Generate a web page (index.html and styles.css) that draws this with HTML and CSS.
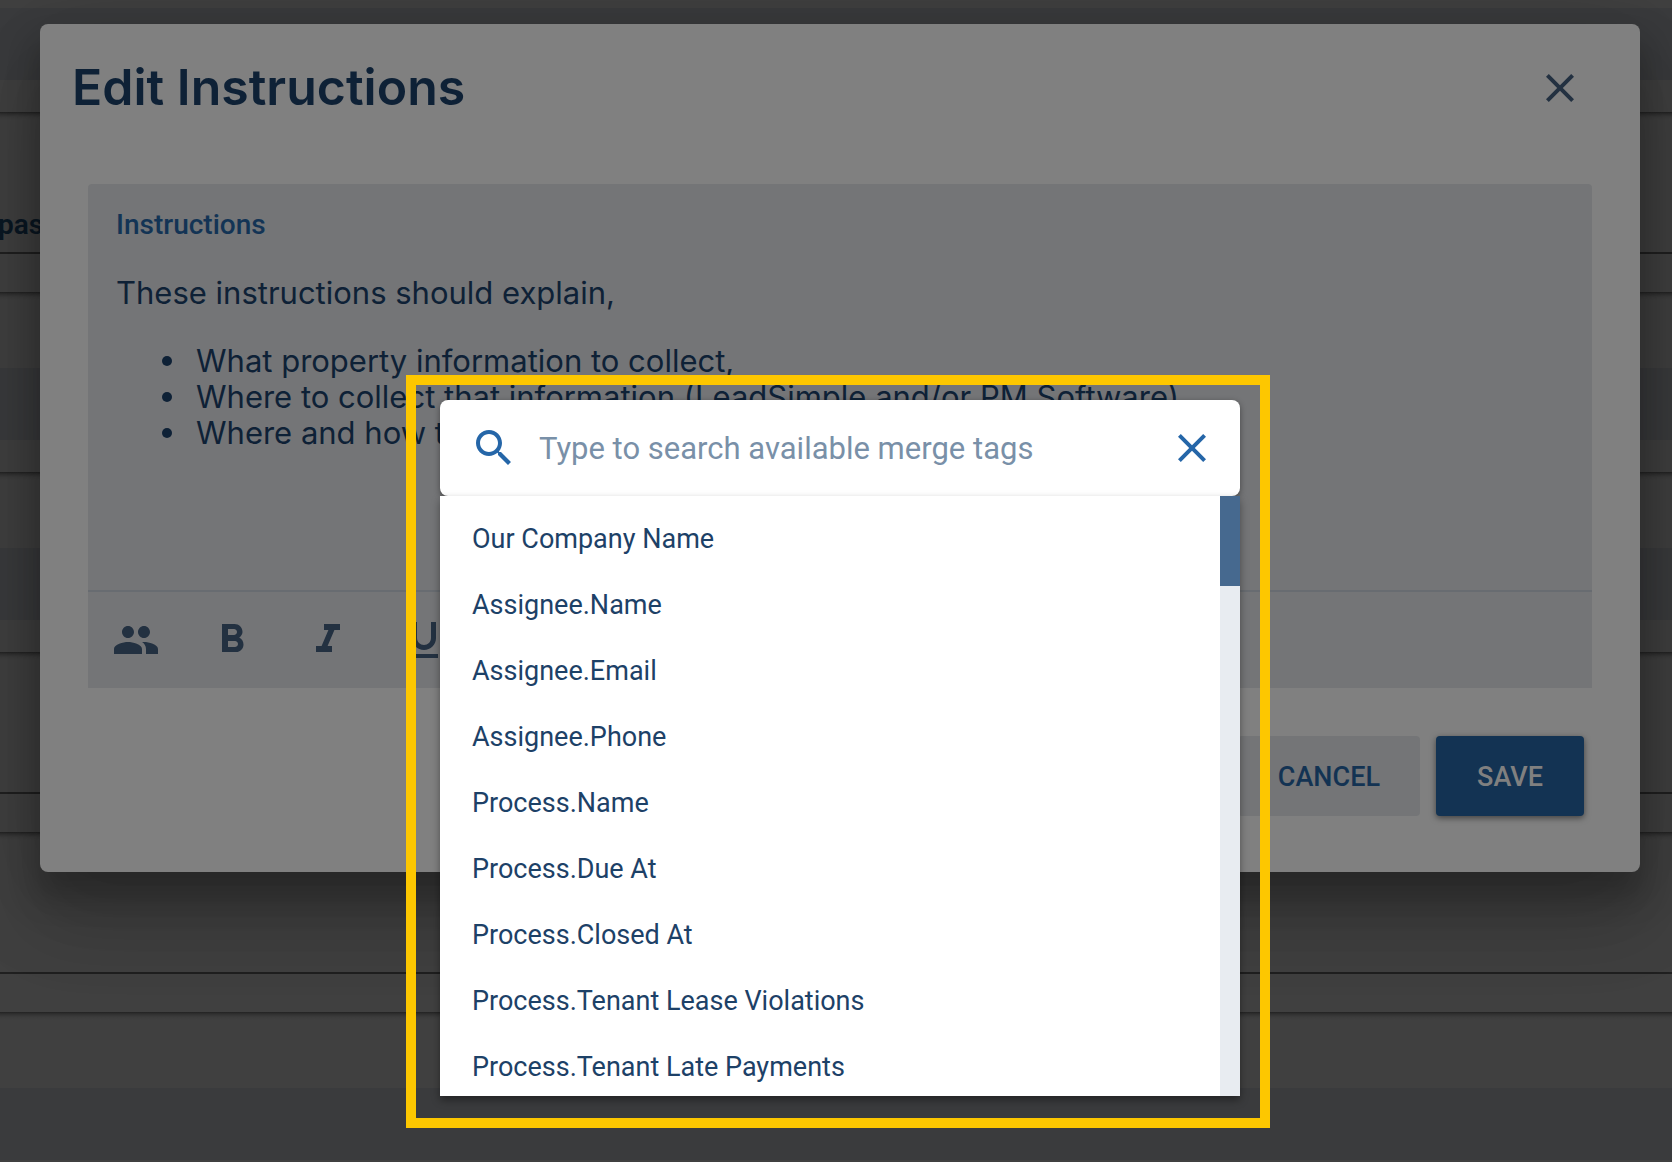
FILE: index.html
```html
<!DOCTYPE html>
<html lang="en">
<head>
  <meta charset="utf-8">
  <title>Edit Instructions</title>
  <link rel="stylesheet" href="styles.css">
</head>
<body>
  <div class="page">
    <div class="card card-first"><div class="card-field"></div></div>
    <div class="card card-tabs"><span class="card-label">pas</span></div>
    <div class="card"><div class="card-field"></div></div>
    <div class="card"><div class="card-field"></div></div>
    <div class="card card-tabs"></div>
    <div class="card card-tabs"></div>
    <div class="card"><div class="card-field"></div></div>
  </div>

  <div class="overlay">
    <section class="modal" role="dialog" aria-labelledby="modal-title">
      <header class="modal-header">
        <h1 class="modal-title" id="modal-title">Edit Instructions</h1>
        <button class="icon-button" type="button" aria-label="Close">
          <svg class="icon" viewBox="0 0 24 24"><path d="M19 6.41L17.59 5 12 10.59 6.41 5 5 6.41 10.59 12 5 17.59 6.41 19 12 13.41 17.59 19 19 17.59 13.41 12z"/></svg>
        </button>
      </header>

      <div class="editor">
        <div class="editor-body">
          <h2 class="editor-label">Instructions</h2>
          <p class="editor-text">These instructions should explain,</p>
          <ul class="editor-list">
            <li>What property information to collect,</li>
            <li>Where to collect that information (LeadSimple and/or PM Software)</li>
            <li>Where and how to</li>
          </ul>
        </div>
        <div class="toolbar">
          <button class="icon-button" type="button" aria-label="Merge tags">
            <svg class="icon" viewBox="0 0 24 24"><path d="M16 11c1.66 0 2.99-1.34 2.99-3S17.66 5 16 5c-1.66 0-3 1.34-3 3s1.34 3 3 3zm-8 0c1.66 0 2.99-1.34 2.99-3S9.66 5 8 5C6.34 5 5 6.34 5 8s1.34 3 3 3zm0 2c-2.33 0-7 1.17-7 3.5V19h14v-2.500c0-2.330-4.670-3.500-7-3.500zm8 0c-.29 0-.62.02-.97.05 1.160.84 1.970 1.970 1.970 3.450V19h6v-2.500c0-2.330-4.670-3.500-7-3.500z"/></svg>
          </button>
          <button class="icon-button" type="button" aria-label="Bold">
            <svg class="icon" viewBox="0 0 24 24"><path d="M15.600 10.790c.97-.67 1.650-1.770 1.650-2.790 0-2.260-1.750-4-4-4H7v14h7.040c2.090 0 3.710-1.700 3.710-3.790 0-1.520-.86-2.820-2.150-3.420zM10 6.500h3c.83 0 1.500.67 1.500 1.500s-.67 1.500-1.500 1.500h-3v-3zm3.500 9H10v-3h3.500c.83 0 1.500.67 1.500 1.500s-.67 1.500-1.500 1.500z"/></svg>
          </button>
          <button class="icon-button" type="button" aria-label="Italic">
            <svg class="icon" viewBox="0 0 24 24"><path d="M10 4v3h2.210l-3.420 8H6v3h8v-3h-2.210l3.420-8H18V4z"/></svg>
          </button>
          <button class="icon-button" type="button" aria-label="Underline">
            <svg class="icon" viewBox="0 0 24 24"><path d="M12 17c3.310 0 6-2.690 6-6V3h-2.500v8c0 1.930-1.570 3.500-3.500 3.500S8.500 12.930 8.500 11V3H6v8c0 3.310 2.690 6 6 6zm-7 2v2h14v-2H5z"/></svg>
          </button>
        </div>
      </div>

      <footer class="modal-footer">
        <button class="button" type="button">CANCEL</button>
        <button class="button button-primary" type="button">SAVE</button>
      </footer>
    </section>

    <div class="highlight">
      <form class="search">
        <svg class="icon" viewBox="0 0 24 24" aria-hidden="true"><path d="M15.500 14h-.79l-.28-.27C15.410 12.590 16 11.110 16 9.500 16 5.910 13.090 3 9.500 3S3 5.910 3 9.500 5.910 16 9.500 16c1.610 0 3.090-.59 4.230-1.570l.27.28v.79l5 4.990L20.490 19l-4.990-5zm-6 0C7.010 14 5 11.990 5 9.500S7.010 5 9.500 5 14 7.010 14 9.500 11.990 14 9.500 14z"/></svg>
        <input class="search-input" type="text" aria-label="Search merge tags" placeholder="Type to search available merge tags">
        <button class="icon-button" type="button" aria-label="Close search">
          <svg class="icon" viewBox="0 0 24 24"><path d="M19 6.41L17.59 5 12 10.59 6.41 5 5 6.41 10.59 12 5 17.59 6.41 19 12 13.41 17.59 19 19 17.59 13.41 12z"/></svg>
        </button>
      </form>
      <div class="results">
        <ul class="tags">
          <li><button class="tag" type="button">Our Company Name</button></li>
          <li><button class="tag" type="button">Assignee.Name</button></li>
          <li><button class="tag" type="button">Assignee.Email</button></li>
          <li><button class="tag" type="button">Assignee.Phone</button></li>
          <li><button class="tag" type="button">Process.Name</button></li>
          <li><button class="tag" type="button">Process.Due At</button></li>
          <li><button class="tag" type="button">Process.Closed At</button></li>
          <li><button class="tag" type="button">Process.Tenant Lease Violations</button></li>
          <li><button class="tag" type="button">Process.Tenant Late Payments</button></li>
        </ul>
        <div class="scrollbar"><div class="scrollbar-thumb"></div></div>
      </div>
    </div>
  </div>
</body>
</html>
```
FILE: styles.css
```css
* {
  box-sizing: border-box;
}

body {
  margin: 0;
  position: relative;
  overflow: hidden;
  height: 100vh;
  background: #404040;
  font-family: Roboto, "Liberation Sans", sans-serif;
}

button,
input {
  margin: 0;
  padding: 0;
  border: 0;
  background: none;
  color: inherit;
  font: inherit;
}

/* Page behind the dialog */
.card {
  height: 180px;
  padding-top: 76px;
  background: linear-gradient(#222, #303030 2px, #3c3c3c 5px, #404040 8px);
}

.card-first {
  height: 112px;
  padding-top: 8px;
  background: #404040;
}

.card-field {
  height: 72px;
  background: #3a3b3d;
}

.card-tabs {
  display: flex;
  flex-direction: column;
  justify-content: flex-end;
  padding: 0 0 38px;
}

.card-tabs::after {
  content: "";
  height: 2px;
  background: #202020;
}

.card-label {
  margin-left: -2px;
  padding-bottom: 9px;
  color: #0a1723;
  font-size: 28px;
  font-weight: 600;
  line-height: 36px;
}

/* Dialog */
.overlay {
  position: absolute;
  inset: 0;
  padding: 24px 32px 0 40px;
}

.modal {
  padding: 32px 48px 56px;
  border-radius: 8px;
  background: #808080;
  box-shadow: 0 22px 30px 4px rgba(0, 0, 0, 0.2), 0 48px 76px 6px rgba(0, 0, 0, 0.14), 0 18px 92px 16px rgba(0, 0, 0, 0.12);
  color: #0e2136;
}

.modal-header {
  display: flex;
  align-items: center;
  justify-content: space-between;
  height: 64px;
  margin: 0 8px 64px -16px;
}

.modal-title {
  margin: 0;
  padding-bottom: 2px;
  font-family: Inter, sans-serif;
  font-size: 50px;
  font-weight: 600;
  line-height: 60px;
}

.icon {
  display: block;
  flex: none;
  width: 48px;
  height: 48px;
  fill: currentColor;
}

.modal .icon {
  fill: #233141;
}

.editor {
  border-radius: 4px 4px 0 0;
  background: #747577;
}

.editor-body {
  height: 408px;
  padding: 23px 28px;
  border-bottom: 2px solid #686c71;
}

.editor-label {
  margin: 0 0 32px;
  color: #133455;
  font-size: 28px;
  font-weight: 500;
  line-height: 36px;
}

.editor-text,
.editor-list {
  margin: 0 0 32px;
  font-family: Inter, sans-serif;
  font-size: 31px;
  line-height: 36px;
}

.editor-list {
  padding-left: 46px;
  list-style: none;
}

.editor-list li {
  display: flex;
  align-items: center;
  gap: 24px;
}

.editor-list li::before {
  content: "";
  width: 10px;
  height: 10px;
  border-radius: 50%;
  background: currentColor;
}

.toolbar {
  display: flex;
  align-items: center;
  gap: 48px;
  height: 96px;
  padding: 0 24px;
}

.modal-footer {
  display: flex;
  justify-content: flex-end;
  gap: 16px;
  margin: 48px 8px 0;
}

.button {
  min-width: 148px;
  height: 80px;
  padding: 2px 40px 0;
  border-radius: 4px;
  background: #747577;
  color: #133353;
  font-size: 27px;
  font-weight: 500;
}

.button-primary {
  background: #133353;
  color: #808080;
  box-shadow: 0 2px 6px rgba(0, 0, 0, 0.5);
}

/* Merge tag picker */
.highlight {
  position: absolute;
  top: 375px;
  left: calc(50% - 430px);
  width: 864px;
  padding: 15px 20px 22px 24px;
  border: 10px solid #fdc700;
}

.search {
  display: flex;
  align-items: center;
  height: 96px;
  padding: 0 24px 0 30px;
  border-radius: 8px;
  background: #fff;
  box-shadow: 0 2px 6px rgba(0, 0, 0, 0.4);
  color: #2566a8;
}

.search-input {
  flex: 1;
  min-width: 0;
  padding: 2px 0 0 21px;
  outline: 0;
  font-size: 31px;
  line-height: 40px;
}

.search-input::placeholder {
  color: #7990a8;
  opacity: 1;
}

.results {
  display: flex;
  position: relative;
  height: 600px;
  background: #fff;
  box-shadow: 0 4px 8px rgba(0, 0, 0, 0.4);
}

.tags {
  flex: 1;
  margin: 0;
  padding: 10px 0 0;
  overflow: hidden;
  list-style: none;
}

.tag {
  display: block;
  width: 100%;
  height: 66px;
  padding: 0 32px;
  color: #1d4167;
  font-size: 27px;
  text-align: left;
}

.scrollbar {
  width: 20px;
  background: #e8ecf1;
}

.scrollbar-thumb {
  height: 90px;
  background: #46698f;
}
```
